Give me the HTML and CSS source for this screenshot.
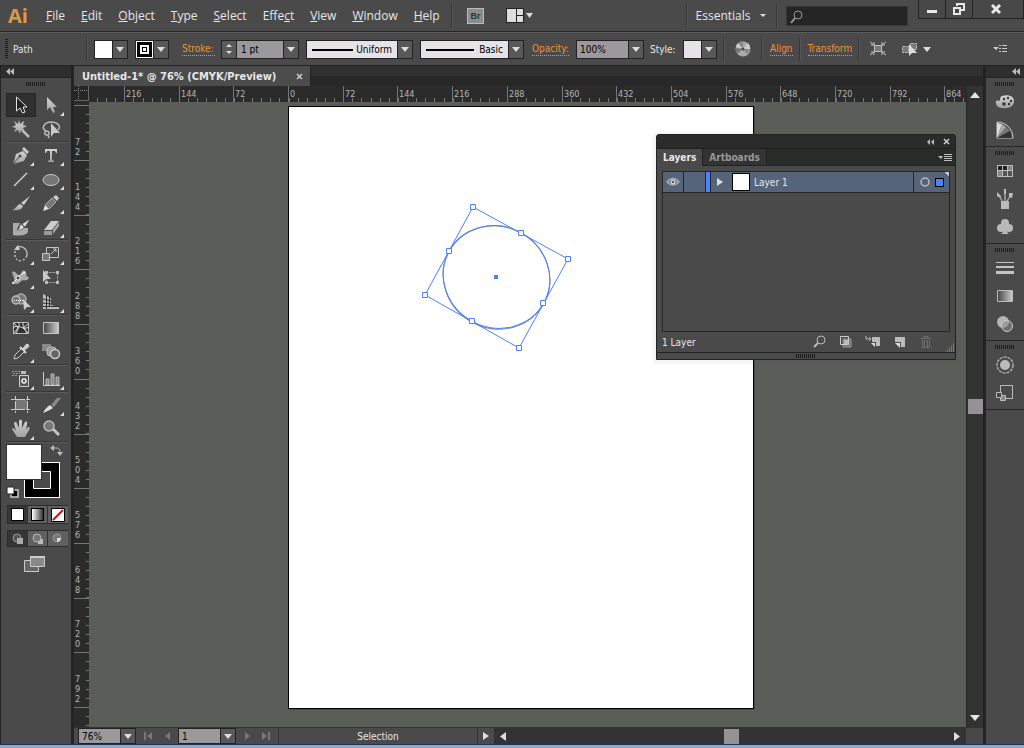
FILE: index.html
```html
<!DOCTYPE html>
<html lang="en">
<head>
  <meta charset="utf-8">
  <title>Untitled-1</title>
  <link rel="stylesheet" href="styles.css">
</head>
<body>

<svg class="defs" width="0" height="0">
  <defs>
    <linearGradient id="metal" x1="0" y1="0" x2="0" y2="1">
      <stop offset="0" stop-color="#d4d4d4"/><stop offset="1" stop-color="#a0a0a0"/>
    </linearGradient>
    <linearGradient id="fade">
      <stop offset="0" stop-color="#444"/><stop offset="1" stop-color="#ccc"/>
    </linearGradient>
  </defs>
</svg>

<header class="menubar">
  <span class="logo">Ai</span>
  <nav class="menus">
    <a href="#"><u>F</u>ile</a>
    <a href="#"><u>E</u>dit</a>
    <a href="#"><u>O</u>bject</a>
    <a href="#"><u>T</u>ype</a>
    <a href="#"><u>S</u>elect</a>
    <a href="#">Effe<u>c</u>t</a>
    <a href="#"><u>V</u>iew</a>
    <a href="#"><u>W</u>indow</a>
    <a href="#"><u>H</u>elp</a>
  </nav>
  <i class="sep"></i>
  <button class="bridge">Br</button>
  <button class="arrange" aria-label="Arrange documents">
    <svg width="28" height="16" viewBox="0 0 28 16"><path d="M0 0h18v15H0z" fill="#222"/><path d="M1 1h16v13H1z" fill="#ddd"/><path d="M10.500 1v13M10.500 7.500H17" stroke="#222"/><path d="M20 5h7l-3.500 5z" fill="#ddd"/></svg>
  </button>
  <div class="menu-right">
    <i class="sep"></i>
    <button class="workspace">Essentials <i class="tri small"></i></button>
    <i class="sep"></i>
    <label class="search">
      <svg width="14" height="14" viewBox="0 0 14 14" fill="none" stroke="#999"><circle cx="8" cy="5" r="4"/><path d="M5 8l-4 5" stroke-width="2"/></svg>
      <input type="text" aria-label="Search">
    </label>
    <div class="winbtns">
      <button aria-label="Minimize"><svg width="12" height="14"><path d="M1 8h10v3H1z" fill="#e8e8e8"/></svg></button>
      <button aria-label="Restore"><svg width="14" height="14" fill="none" stroke="#e8e8e8" stroke-width="2"><path d="M5 4V2h7v6h-3M2 6h6v6H2z"/></svg></button>
      <button class="x" aria-label="Close"><svg width="12" height="12"><path d="M2 2l8 8M10 2l-8 8" stroke="#e8e8e8" stroke-width="3"/></svg></button>
    </div>
  </div>
</header>

<section class="control">
  <i class="vgrip"></i>
  <span class="what">Path</span>
  <i class="sep"></i>
  <button class="swatch" aria-label="Fill"><i class="chip white"></i><i class="arrow"></i></button>
  <button class="swatch" aria-label="Stroke color"><i class="chip ring"></i><i class="arrow"></i></button>
  <label class="link stroke" for="weight">Stroke:</label>
  <span class="combo">
    <i class="spin"><i class="tri up"></i><i class="tri small"></i></i>
    <input id="weight" class="weight" type="text" value="1 pt"><i class="arrow"></i>
  </span>
  <span class="combo line">
    <svg width="46" height="17"><path d="M5 8h41v2H5z"/></svg>
    <select aria-label="Width profile"><option>Uniform</option></select><i class="arrow"></i>
  </span>
  <span class="combo line basic">
    <svg width="53" height="17"><path d="M5 8h48v2H5z"/></svg>
    <select aria-label="Brush"><option>Basic</option></select><i class="arrow"></i>
  </span>
  <label class="link opacity" for="opac">Opacity:</label>
  <span class="combo">
    <input id="opac" class="opac" type="text" value="100%"><i class="arrow"></i>
  </span>
  <span class="style">Style:</span>
  <button class="swatch" aria-label="Graphic style"><i class="chip pale"></i><i class="arrow"></i></button>
  <i class="sep"></i>
  <button class="plain wheel" aria-label="Recolor"><svg width="16" height="16" viewBox="0 0 16 16"><circle cx="8" cy="8" r="7.500" fill="#aaa"/><path d="M8 8L3 2a7 7 0 0 1 5-2zM8 8h7a7 7 0 0 1-3 5z" fill="#888"/><path d="M8 8l5-6a7 7 0 0 1 2 6zM8 8L1 6a7 7 0 0 1 2-4z" fill="#ccc"/><path d="M8 8L2 13A7 7 0 0 1 1 7z" fill="#777"/><circle cx="8" cy="8" r="1.500" fill="#4a4a4a"/></svg></button>
  <i class="sep"></i>
  <a class="link" href="#">Align</a>
  <i class="sep"></i>
  <a class="link" href="#">Transform</a>
  <i class="sep"></i>
  <button class="plain" aria-label="Isolate"><svg width="16" height="16" viewBox="0 0 16 16" fill="none" stroke="#c4c4c4"><path d="M4.500 4.500h7v6h-7z" fill="#777"/><path d="M0 1l4 3M16 1l-4 3M0 14l4-3M16 14l-4-3M1 4h3V1M15 4h-3V1M1 11h3v3M15 11h-3v3"/></svg></button>
  <button class="plain similar" aria-label="Select similar"><svg width="30" height="16" viewBox="0 0 30 16"><path d="M1.500 5.500h6v6h-6zM9.500 2.500h6v6h-6z" fill="#777" stroke="#bbb" stroke-dasharray="3 1"/><path d="M8 3v12l3-3h5z" fill="#ddd"/><path d="M22 6h8l-4 5z" fill="#ddd"/></svg></button>
  <button class="plain flyout" aria-label="Panel menu"><svg width="14" height="10"><path d="M0 3h6L3 6zM6 1h2v1H6zM9 1h5v1H9zM6 4h2v1H6zM9 4h5v1H9zM6 7h2v1H6zM9 7h5v1H9z" fill="#ccc"/></svg></button>
</section>

<div class="work">

  <aside class="toolbox">
    <div class="cap"><svg width="8" height="7"><path d="M4 0v7L0 3.500zM8 0v7L4 3.500z" fill="#bbb"/></svg></div>
    <i class="grip"></i>
    <div class="tools">
      <button class="on" aria-label="Selection"><svg viewBox="0 0 30 24"><path d="M10.500 4v14l3.500-3 2.500 5 2.500-1-2-5h4z" fill="#222" stroke="#e4e4e4"/></svg></button>
      <button aria-label="Direct selection"><svg viewBox="0 0 30 24"><path d="M10 4v13l3-3 3 6 2-1-2-5h4z" fill="url(#metal)"/><path class="more" d="M27 19v4h-4z"/></svg></button>
      <button aria-label="Magic wand"><svg viewBox="0 0 30 24"><path d="M13 3l1 4 4-3-1 4 4 1-4 2 2 4-4-2-1 4-2-4-4 2 2-4-4-1 4-2-2-4 4 3z" fill="url(#metal)"/><path d="M16 13l7 7" stroke="#bbb" stroke-width="2.500"/></svg></button>
      <button aria-label="Lasso"><svg viewBox="0 0 30 24"><path d="M9 14c-6-3-1-9 5-9s11 4 7 8M9 14c4 0 4 4 1 4s-3-3-1-4M11 18l1 3" fill="none" stroke="#bbb" stroke-width="1.500"/><path d="M14 6v14l3-4h6z" fill="#c8c8c8"/></svg></button>
      <i class="rule"></i>
      <button aria-label="Pen"><svg viewBox="0 0 30 24"><path d="M7 21l3-10 7-3 4 4-3 6-11 3z" fill="url(#metal)"/><path d="M16 6l2-2 5 5-2 2z" fill="#ccc"/><path d="M7 21l6-7" stroke="#444"/><circle cx="14" cy="13" r="1.500" fill="#444"/><path class="more" d="M28 19v4h-4z"/></svg></button>
      <button aria-label="Type"><svg viewBox="0 0 30 24"><path d="M8 6h12v4h-1l-1-2h-3v9l2 1v1h-6v-1l2-1V8h-3l-1 2H8z" fill="url(#metal)"/><path class="more" d="M27 19v4h-4z"/></svg></button>
      <button aria-label="Line segment"><svg viewBox="0 0 30 24"><path d="M8 19L21 6" stroke="#ccc" stroke-width="1.500"/><path class="more" d="M28 19v4h-4z"/></svg></button>
      <button aria-label="Ellipse"><svg viewBox="0 0 30 24"><ellipse cx="14" cy="13" rx="8" ry="5.500" fill="#777" stroke="#c4c4c4"/><path class="more" d="M27 19v4h-4z"/></svg></button>
      <button aria-label="Paintbrush"><svg viewBox="0 0 30 24"><path d="M24 5l-9 7 3 2z" fill="#ccc"/><path d="M14 13l3 2c-1 4-6 5-11 4 4-1 5-5 8-6z" fill="url(#metal)"/></svg></button>
      <button aria-label="Pencil"><svg viewBox="0 0 30 24"><path d="M6 20l2-6 4 4z" fill="#ddd"/><path d="M8 14l7-7 4 4-7 7z" fill="#777" stroke="#aaa"/><path d="M16 6l3-2 3 3-2 3z" fill="#ccc"/><path class="more" d="M27 19v4h-4z"/></svg></button>
      <button aria-label="Blob brush"><svg viewBox="0 0 30 24"><path d="M7 8h7l-3 6c1 2 5 1 7-1h4v4c-2 4-10 4-15 3z" fill="#aaa"/><path d="M24 4l-8 5 3 3zM15 9l3 3c-1 3-4 3-7 3 3-1 2-4 4-6z" fill="#ddd" stroke="#444" stroke-width=".5"/></svg></button>
      <button aria-label="Eraser"><svg viewBox="0 0 30 24"><path d="M14 6h8l-7 9H7z" fill="#ccc"/><path d="M7 16h8v4H7z" fill="#999"/><path d="M16 15l6-8v4l-6 8z" fill="#aaa"/><path class="more" d="M27 19v4h-4z"/></svg></button>
      <i class="rule"></i>
      <button aria-label="Rotate"><svg viewBox="0 0 30 24"><path d="M10 6a7 7 0 1 1 1 12" fill="none" stroke="#bbb" stroke-width="1.500" stroke-dasharray="19 2 2 2 2 2"/><path d="M9 9v5l2 4" fill="none" stroke="#bbb" stroke-width="1.500" stroke-dasharray="2 2"/><path d="M8 8l4-5 2 5z" fill="#ccc"/><path class="more" d="M28 19v4h-4z"/></svg></button>
      <button aria-label="Scale"><svg viewBox="0 0 30 24" fill="none" stroke="#c4c4c4"><path d="M9.500 5.500h12v10h-12z"/><path d="M5.500 11.500h7v7h-7z" fill="#777"/><path d="M14 12l5-5m-3 0h3v3"/><path class="more" d="M27 19v4h-4z"/></svg></button>
      <button aria-label="Width"><svg viewBox="0 0 30 24"><path d="M6 6c4-2 4 3 7 3s2-6 6-4c3 1-1 6 4 6-1 5-5 2-8 4-2 3-5 4-8 2 3-4 0-6-1-11z" fill="#aaa"/><path d="M7 17L17 7" stroke="#eee"/><circle cx="12" cy="12" r="2" fill="#444" stroke="#eee"/><circle cx="7" cy="17" r="1" fill="#fff"/><circle cx="18" cy="7" r="1" fill="#fff"/><path class="more" d="M28 19v4h-4z"/></svg></button>
      <button aria-label="Free transform"><svg viewBox="0 0 30 24"><path d="M9.500 6.500h11v10h-11z" fill="none" stroke="#aaa" stroke-dasharray="2 1"/><path d="M8 5h3v3H8zM19 5h3v3h-3zM19 15h3v3h-3zM8 15h3v3H8z" fill="#bbb"/><path d="M6 4v12l3-3h5z" fill="#ccc"/></svg></button>
      <button aria-label="Shape builder"><svg viewBox="0 0 30 24"><circle cx="15" cy="9" r="5" fill="#777" stroke="#aaa" stroke-width="1.500"/><circle cx="10" cy="10" r="4" fill="#777" stroke="#bbb" stroke-width="1.500"/><path d="M8 10.500h9" stroke="#fff" stroke-dasharray="1 1"/><path d="M17 9l1 11 3-3h4z" fill="#ccc"/><path class="more" d="M28 19v4h-4z"/></svg></button>
      <button aria-label="Perspective grid"><svg viewBox="0 0 30 24"><path d="M6 4l8 4v7l8 2v2H6z" fill="#bbb"/><path d="M9.500 5v14M12.500 6v10M6 9l8 2M6 13l8 1M6 16.500h16" stroke="#333"/><path class="more" d="M27 19v4h-4z"/></svg></button>
      <i class="rule"></i>
      <button aria-label="Mesh"><svg viewBox="0 0 30 24"><path d="M7.500 6.500h15v11h-15z" fill="#333" stroke="#bbb"/><path d="M7 12c5-5 10 3 16-1M12 6c4 5-3 8-1 12M18 6c-4 4 4 8 2 12M8 7l4 5-4 5M22 8l-5 4 5 5" fill="none" stroke="#ddd"/></svg></button>
      <button aria-label="Gradient"><svg viewBox="0 0 30 24"><path d="M6.500 6.500h15v11h-15z" fill="url(#fade)" stroke="#c4c4c4"/></svg></button>
      <button aria-label="Eyedropper"><svg viewBox="0 0 30 24"><path d="M16 9l4-5c2-1 4 1 3 3l-5 4z" fill="#ccc"/><path d="M14 7l6 6" stroke="#ddd" stroke-width="2"/><path d="M15 9l-6 6-1 4 4-1 6-6" fill="#444" stroke="#ccc"/><path class="more" d="M28 19v4h-4z"/></svg></button>
      <button aria-label="Blend"><svg viewBox="0 0 30 24"><path d="M5 4h9v7H5z" fill="#888"/><rect x="10" y="7" width="9" height="9" rx="3" fill="#999" stroke="#bbb"/><circle cx="18" cy="14" r="4.500" fill="#666" stroke="#ccc" stroke-width="1.500"/></svg></button>
      <i class="rule"></i>
      <button aria-label="Symbol sprayer"><svg viewBox="0 0 30 24"><path d="M6 4.500h9M7 6.500h7M6 8.500h5" stroke="#999" stroke-dasharray="2 1"/><path d="M15 4h5v3h-5z" fill="#bbb"/><path d="M13.500 8.500h9v11h-9z" fill="#555" stroke="#ccc"/><circle cx="18" cy="14" r="2" fill="none" stroke="#eee" stroke-width="1.500"/><path class="more" d="M28 19v4h-4z"/></svg></button>
      <button aria-label="Column graph"><svg viewBox="0 0 30 24"><path d="M6.500 5v13.500H23" fill="none" stroke="#ccc"/><path d="M9 12h3v6H9zM14 7h3v11h-3zM19 10h3v8h-3z" fill="#888" stroke="#ccc" stroke-width=".8"/><path class="more" d="M27 19v4h-4z"/></svg></button>
      <i class="rule"></i>
      <button aria-label="Artboard"><svg viewBox="0 0 30 24"><path d="M10 7h11v9H10z" fill="#777"/><path d="M9.500 3v17M21.500 3v17M5 6.500h20M5 16.500h20" stroke="#ccc" stroke-dasharray="4 1 9 1 4"/></svg></button>
      <button aria-label="Slice"><svg viewBox="0 0 30 24"><path d="M24 5l-4 0-6 7 3 2z" fill="#888"/><path d="M13 12l3 3c-2 2-6 3-10 5 2-4 4-6 7-8z" fill="#ddd"/><path class="more" d="M27 19v4h-4z"/></svg></button>
      <button aria-label="Hand"><svg viewBox="0 0 30 24"><path d="M11 20l-5-8c1-2 3 0 4 2L8 6c1-2 3-1 3 1l2 4V4c1-2 3-1 3 0v7l3-6c1-1 3 0 2 2l-1 6 2-3c2 0 2 1 1 3l-4 7z" fill="url(#metal)"/><path class="more" d="M28 19v4h-4z"/></svg></button>
      <button aria-label="Zoom"><svg viewBox="0 0 30 24"><path d="M16 12l6 6" stroke="#c4c4c4" stroke-width="3"/><circle cx="12" cy="9" r="5" fill="#777" stroke="#bbb" stroke-width="1.500"/></svg></button>
      <i class="rule"></i>
    </div>
    <svg class="paint" width="66" height="58" viewBox="0 2 66 58">
      <path d="M18 20h36v36H18z" fill="#fff"/><path d="M19 21h34v34H19z"/><path d="M27.500 29.500h17v17h-17z" fill="#4a4a4a" stroke="#fff"/>
      <path d="M0 2h36v36H0z" fill="#333"/><path d="M1 3h34v34H1z" fill="#fff"/>
      <path d="M47 6h4q3 0 3 5" fill="none" stroke="#bbb"/><path d="M44 6l4-3v6zM51 10h6l-3 4z" fill="#bbb"/>
      <path d="M5 48h7v7H5z" stroke="#ccc" stroke-width="1.500"/><path d="M1 45h7v7H1z" fill="#fff" stroke="#222"/>
    </svg>
    <div class="trio">
      <button class="on" aria-label="Color"><i class="box"></i></button>
      <button aria-label="Gradient fill"><i class="box grad"></i></button>
      <button aria-label="None"><svg width="14" height="14"><path d="M.5.5h13v13H.5z" fill="#fff" stroke="#000"/><path d="M2 12L12 2" stroke="#e00" stroke-width="2"/></svg></button>
    </div>
    <div class="trio modes">
      <button class="on" aria-label="Draw normal"><svg width="12" height="12"><circle cx="5" cy="5" r="4" fill="#555" stroke="#999"/><path d="M5 5h6v6H5z" fill="#aaa"/></svg></button>
      <button aria-label="Draw behind"><svg width="12" height="12"><path d="M6 6h5v5H6z" fill="#bbb"/><circle cx="5" cy="5" r="4" fill="#777" stroke="#bbb"/></svg></button>
      <button aria-label="Draw inside"><svg width="12" height="12"><circle cx="5" cy="5" r="4" fill="#777" stroke="#999"/><path d="M5 5h4c0 2-2 4-4 4z" fill="#ddd"/></svg></button>
    </div>
    <button class="plain screen" aria-label="Screen mode"><svg width="22" height="18" viewBox="0 0 22 18" stroke="#ccc"><path d="M.5 5.500h14v11H.5z" fill="#666"/><path d="M6.500 1.500h14v10h-14z" fill="#888"/><path d="M6 1h15v2H6z" fill="#ccc" stroke="none"/></svg></button>
  </aside>

  <main class="doc">
    <div class="tabs">
      <div class="tab">Untitled-1* @ 76% (CMYK/Preview) <button class="plain" aria-label="Close tab"><svg width="7" height="7"><path d="M1 1l5 5M6 1L1 6" stroke="#ccc" stroke-width="1.500"/></svg></button></div>
    </div>
    <div class="sheet">
      <svg class="corner" width="15" height="15"><path d="M4.500 0v15M0 4.500h15" stroke="#888" stroke-dasharray="1 1"/><path d="M0 14.500h15M14.500 0v15" stroke="#666"/></svg>
      <div class="ruler top">
        <svg width="1900" height="16" shape-rendering="crispEdges">
          <path d="M8 13.500H1900" stroke="#777" stroke-width="4" stroke-dasharray="1 8.120"/>
          <path d="M35.500 0v16M90.500 0v16M144.500 0v16M199.500 0v16M254.500 0v16M308.500 0v16M363.500 0v16M418.500 0v16M473.500 0v16M527.500 0v16M582.500 0v16M637.500 0v16M691.500 0v16M746.500 0v16M801.500 0v16M855.500 0v16" stroke="#777"/>
          <g class="num">
            <text x="37" y="11">216</text><text x="92" y="11">144</text><text x="146" y="11">72</text><text x="201" y="11">0</text>
            <text x="256" y="11">72</text><text x="310" y="11">144</text><text x="365" y="11">216</text><text x="420" y="11">288</text>
            <text x="475" y="11">360</text><text x="529" y="11">432</text><text x="584" y="11">504</text><text x="639" y="11">576</text>
            <text x="693" y="11">648</text><text x="748" y="11">720</text><text x="803" y="11">792</text><text x="857" y="11">864</text>
          </g>
        </svg>
      </div>
      <div class="vscroll">
        <button class="plain" aria-label="Scroll up"><svg width="10" height="8"><path d="M5 1l5 6H0z" fill="#e4e4e4"/></svg></button>
        <i class="thumb"></i>
        <button class="plain" aria-label="Scroll down"><svg width="10" height="8"><path d="M0 1h10L5 7z" fill="#e4e4e4"/></svg></button>
      </div>
      <div class="ruler left">
        <svg width="15" height="1300" shape-rendering="crispEdges">
          <path d="M13.500 3V1300" stroke="#777" stroke-width="3" stroke-dasharray="1 8.120"/>
          <path d="M0 3.500h15M0 58.500h15M0 113.500h15M0 167.500h15M0 222.500h15M0 277.500h15M0 332.500h15M0 386.500h15M0 441.500h15M0 496.500h15M0 550.500h15M0 605.500h15" stroke="#777"/>
          <g class="num">
            <text><tspan x="1" y="43">7</tspan><tspan x="1" y="53">2</tspan></text>
            <text><tspan x="1" y="88">1</tspan><tspan x="1" y="98">4</tspan><tspan x="1" y="108">4</tspan></text>
            <text><tspan x="1" y="142">2</tspan><tspan x="1" y="152">1</tspan><tspan x="1" y="162">6</tspan></text>
            <text><tspan x="1" y="197">2</tspan><tspan x="1" y="207">8</tspan><tspan x="1" y="217">8</tspan></text>
            <text><tspan x="1" y="252">3</tspan><tspan x="1" y="262">6</tspan><tspan x="1" y="272">0</tspan></text>
            <text><tspan x="1" y="307">4</tspan><tspan x="1" y="317">3</tspan><tspan x="1" y="327">2</tspan></text>
            <text><tspan x="1" y="361">5</tspan><tspan x="1" y="371">0</tspan><tspan x="1" y="381">4</tspan></text>
            <text><tspan x="1" y="416">5</tspan><tspan x="1" y="426">7</tspan><tspan x="1" y="436">6</tspan></text>
            <text><tspan x="1" y="471">6</tspan><tspan x="1" y="481">4</tspan><tspan x="1" y="491">8</tspan></text>
            <text><tspan x="1" y="525">7</tspan><tspan x="1" y="535">2</tspan><tspan x="1" y="545">0</tspan></text>
            <text><tspan x="1" y="580">7</tspan><tspan x="1" y="590">9</tspan><tspan x="1" y="600">2</tspan></text>
          </g>
        </svg>
      </div>
      <div class="canvas">
        <div class="artboard">
          <svg width="464" height="601" viewBox="289 107 464 601" fill="none" stroke="#4a80ff">
            <ellipse cx="496.500" cy="277.500" rx="54" ry="51" stroke="#888" transform="rotate(28 496.500 277.500)"/>
            <ellipse cx="496.500" cy="277" rx="54" ry="50.500" transform="rotate(28 496.500 277)"/>
            <path d="M473 207L568 259 519 348 425 295z"/>
            <path d="M494 275h4v4h-4z" fill="#4a80ff" stroke="none"/>
            <g fill="#fff">
              <path d="M470.500 204.500h5v5h-5zM518.500 230.500h5v5h-5zM565.500 256.500h5v5h-5zM540.500 300.500h5v5h-5zM516.500 345.500h5v5h-5zM469.500 318.500h5v5h-5zM422.500 292.500h5v5h-5zM446.500 248.500h5v5h-5z"/>
            </g>
          </svg>
        </div>

        <section class="panel">
          <div class="panel-cap">
            <button class="plain" aria-label="Collapse"><svg width="8" height="6"><path d="M3 0v6L0 3zM7 0v6L4 3z" fill="#bbb"/></svg></button>
            <button class="plain" aria-label="Close panel"><svg width="7" height="7"><path d="M1 1l5 5M6 1L1 6" stroke="#ccc" stroke-width="1.500"/></svg></button>
          </div>
          <div class="panel-tabs">
            <button class="on">Layers</button><button>Artboards</button>
            <button class="plain pm" aria-label="Layers menu"><svg width="14" height="9"><path d="M0 3h5L3 6zM6 1h8v1H6zM6 3h8v1H6zM6 5h8v1H6zM6 7h8v1H6z" fill="#bbb"/></svg></button>
          </div>
          <ul class="layers">
            <li>
              <span class="eye"><svg width="14" height="10" viewBox="0 0 14 10"><path d="M1 5q6-7 12 0-6 6-12 0z" fill="#777" stroke="#a8acb4" stroke-width="1.500"/><circle cx="7" cy="5" r="2.500" fill="#ccc"/><circle cx="7" cy="5" r="1" fill="#333"/></svg></span>
              <span class="lock"></span>
              <i class="color"></i>
              <span class="name"><i class="tri right"></i><i class="thumbnail"></i>Layer 1</span>
              <span class="target"><svg width="10" height="10"><circle cx="5" cy="5" r="4" fill="none" stroke="#bbb" stroke-width="1.500"/></svg><i class="sel"></i></span>
            </li>
          </ul>
          <div class="panel-foot">
            <span class="count">1 Layer</span>
            <button class="plain" aria-label="Locate object"><svg width="14" height="14" fill="none" stroke="#bbb"><circle cx="8" cy="5" r="4"/><path d="M5 8l-4 4" stroke-width="2"/></svg></button>
            <button class="plain" aria-label="Clipping mask"><svg width="14" height="14"><path d="M4 4h8v8H4z" fill="#777" stroke="#999"/><path d="M1.500 1.500h8v8h-8z" fill="none" stroke="#ccc"/><path d="M5 5h4v4H5z" fill="#bbb"/></svg></button>
            <button class="plain" aria-label="New sublayer"><svg width="16" height="14"><path d="M1 1v3h5M4 2l2 2-2 2" fill="none" stroke="#bbb"/><path d="M7 2h8v9h-4V7H7z" fill="#bbb"/><path d="M6 8h4v4z" fill="#ddd"/></svg></button>
            <button class="plain" aria-label="New layer"><svg width="14" height="14"><path d="M2 2h10v10H8V7H2z" fill="#bbb"/><path d="M2 8h5v5z" fill="#ddd"/></svg></button>
            <button class="plain" aria-label="Delete"><svg width="14" height="14" fill="none" stroke="#707070"><path d="M2 3.500h10M5 3V1.500h4V3M3.500 5v7.500h7V5M5.500 5v7M8.500 5v7"/></svg></button>
            <i class="resize"></i>
          </div>
          <div class="panel-grip"><i class="grip"></i></div>
        </section>
      </div>
    </div>
    <footer class="status">
      <span class="combo"><select class="zoomlevel" aria-label="Zoom level"><option>76%</option></select><i class="arrow"></i></span>
      <span class="nav"><button class="plain" aria-label="First"><svg width="9" height="8"><path d="M0 0h2v8H0zM8 0v8L3 4z" fill="#777"/></svg></button><button class="plain" aria-label="Previous"><svg width="6" height="8"><path d="M5 0v8L0 4z" fill="#777"/></svg></button></span>
      <span class="combo"><select class="page" aria-label="Artboard number"><option>1</option></select><i class="arrow"></i></span>
      <span class="nav"><button class="plain" aria-label="Next"><svg width="6" height="8"><path d="M1 0v8l5-4z" fill="#777"/></svg></button><button class="plain" aria-label="Last"><svg width="9" height="8"><path d="M0 0v8l5-4zM6 0h2v8H6z" fill="#777"/></svg></button></span>
      <span class="mode">Selection</span>
      <button class="plain more-btn" aria-label="Status menu"><i class="tri right"></i></button>
      <div class="hscroll">
        <button class="plain" aria-label="Scroll left"><svg width="7" height="9"><path d="M6 0v9L0 4.500z" fill="#ddd"/></svg></button>
        <i class="thumb"></i>
        <button class="plain" aria-label="Scroll right"><svg width="7" height="9"><path d="M1 0v9l6-4.500z" fill="#ddd"/></svg></button>
      </div>
      <i class="end"></i>
    </footer>
  </main>

  <aside class="dock">
    <div class="cap"><svg width="8" height="7"><path d="M4 0v7L0 3.500zM8 0v7L4 3.500z" fill="#bbb"/></svg></div>
    <div class="group">
      <i class="grip"></i>
      <button aria-label="Color"><svg viewBox="0 0 20 20"><path d="M1 11c-1-2 1-3 3-2 2 0 0-4 3-5 6-2 12 0 12 5s-5 8-11 7c-4 0-7-2-7-5z" fill="url(#metal)"/><circle cx="9" cy="7" r="1.200" fill="#333"/><circle cx="13" cy="6" r="1.200" fill="#333"/><circle cx="16" cy="9" r="1.200" fill="#333"/><circle cx="14" cy="12" r="1.200" fill="#333"/><circle cx="9" cy="12" r="1.800" fill="#333"/></svg></button>
      <button aria-label="Color guide"><svg viewBox="0 0 20 20"><path d="M2 2c9 0 16 7 16 16H2z" fill="#555" stroke="#ccc"/><path d="M2 18V3l5 1z" fill="#ddd"/><path d="M2 18L7 4l4 3z" fill="#aaa"/><path d="M2 18l9-11 4 4z" fill="#777"/><path d="M2 18l13-7 2 7z" fill="#333"/></svg></button>
    </div>
    <div class="group">
      <i class="grip"></i>
      <button aria-label="Swatches"><svg viewBox="0 0 20 20"><path d="M2 4h16v12H2z" fill="#bbb"/><path d="M3 5h4v4H3zM8 5h4v4H8z" fill="#222"/><path d="M13 5h4v4h-4zM3 10h4v5H3z" fill="#888"/><path d="M8 10h4v5H8zM13 10h4v5h-4z" fill="#555"/></svg></button>
      <button aria-label="Brushes"><svg viewBox="0 0 20 20"><path d="M6 12h8v8H6z" fill="#bbb"/><path d="M7 12L4 6M10 12V3M12 12l4-6" stroke="#ccc"/><path d="M2 3l4 4-1 2-3-2zM9 0h2v5H9zM14 4l4 0-1 5-3-1z" fill="#bbb"/></svg></button>
      <button aria-label="Symbols"><svg viewBox="0 0 20 20" fill="#b8b8b8"><circle cx="10" cy="6" r="4"/><circle cx="6" cy="11" r="4"/><circle cx="14" cy="11" r="4"/><path d="M9 9h2l1 6 2 2H6l2-2z"/></svg></button>
    </div>
    <div class="group">
      <i class="grip"></i>
      <button aria-label="Stroke"><svg viewBox="0 0 20 20"><path d="M1 4h18v1H1zM1 8h18v2H1zM1 13h18v3H1z" fill="#c4c4c4"/></svg></button>
      <button aria-label="Gradient panel"><svg viewBox="0 0 20 20"><path d="M2.500 4.500h15v11h-15z" fill="url(#fade)" stroke="#bbb"/></svg></button>
      <button aria-label="Transparency"><svg viewBox="0 0 20 20"><circle cx="8" cy="8" r="6" fill="#b4b4b4"/><circle cx="12" cy="12" r="5.500" fill="#888" fill-opacity=".6" stroke="#ccc"/></svg></button>
    </div>
    <div class="group">
      <i class="grip"></i>
      <button aria-label="Appearance"><svg viewBox="0 0 20 20"><circle cx="10" cy="10" r="5" fill="#bbb"/><circle cx="10" cy="10" r="8" fill="none" stroke="#aaa" stroke-width="1.500" stroke-dasharray="3 1"/></svg></button>
      <button aria-label="Graphic styles"><svg viewBox="0 0 20 20" stroke="#bbb"><path d="M5.500 2.500h12v13h-12z" fill="none"/><path d="M5.500 12.500h5v5h-5z" fill="#888"/><path d="M1.500 9.500h5v5h-5z" fill="#444"/></svg></button>
    </div>
  </aside>
</div>
<div class="taskbar"></div>

</body>
</html>
```
FILE: styles.css
```css
* { box-sizing: border-box; }

body {
  margin: 0;
  height: 100vh;
  display: flex;
  flex-direction: column;
  overflow: hidden;
  background: #4a4a4a;
  color: #e6e6e6;
  font-family: "DejaVu Sans Condensed", "DejaVu Sans", Tahoma, sans-serif;
  font-size: 10px;
}

.defs { position: absolute; }
svg { display: block; flex: none; }
i { display: block; font-style: normal; flex: none; }
a { color: inherit; text-decoration: none; }

button, input, select {
  font: inherit;
  color: inherit;
  margin: 0;
  padding: 0;
  border: 0;
  border-radius: 0;
  background: none;
  outline: 0;
  appearance: none;
}
button { display: flex; align-items: center; justify-content: center; flex: none; }

/* shared bits */
.sep { width: 2px; height: 24px; background: #383838; border-right: 1px solid #565656; }
.grip { width: 20px; height: 4px; background: repeating-linear-gradient(90deg, #1c1c1c 0 1px, #4a4a4a 1px 2px); }
.vgrip { width: 3px; height: 20px; background: repeating-linear-gradient(#1c1c1c 0 1px, #4a4a4a 1px 2px); }
.tri { width: 0; height: 0; border: solid transparent; border-width: 4px 4px 0; border-top-color: #ddd; }
.tri.small { border-width: 3px 3px 0; }
.tri.up { border-width: 0 3px 3px; border-bottom-color: #ddd; }
.tri.right { border-width: 4px 0 4px 6px; border-top-color: transparent; border-left-color: #ddd; }

/* menu bar */
.menubar {
  flex: none;
  height: 32px;
  display: flex;
  align-items: center;
  border-bottom: 1px solid #262626;
  font-family: "Open Sans", sans-serif;
  font-size: 12px;
}
.logo {
  width: 37px;
  padding-left: 8px;
  color: #dc9a42;
  font: bold 20px/28px "Open Sans", sans-serif;
}
.menus { display: flex; gap: 16px; width: 397px; padding-left: 9px; }
.menus + .sep { margin-left: 17px; }
.bridge {
  width: 17px;
  height: 16px;
  margin: 0 22px 0 14px;
  background: #8c8c8c;
  border: 1px solid #bbb;
  color: #333;
  font: bold 9px "Liberation Sans", sans-serif;
}
.menu-right { margin-left: auto; display: flex; align-items: center; height: 31px; }
.workspace { width: 86px; gap: 10px; }
.workspace + .sep { margin: 0 2px; }
.search {
  width: 122px;
  height: 20px;
  margin: 0 10px 0 6px;
  padding: 3px;
  display: flex;
  background: #252525;
  border: 1px solid #363636;
}
.search input { min-width: 0; flex: 1; }
.winbtns { display: flex; height: 19px; align-self: flex-start; border: 1px solid #222; border-top: 0; background: #484848; }
.winbtns button { width: 27px; border-right: 1px solid #222; }
.winbtns .x { width: 50px; border: 0; padding-right: 4px; }

/* control bar */
.control {
  flex: none;
  height: 34px;
  display: flex;
  align-items: center;
  padding-left: 5px;
  border-top: 1px solid #5c5c5c;
  border-bottom: 1px solid #222;
}
.what { width: 78px; padding-left: 5px; }
.swatch { height: 19px; width: 34px; margin-left: 7px; border: 1px solid #222; }
.what + .sep + .swatch { margin-left: 6px; }
.chip { width: 17px; height: 17px; }
.chip.white { background: #fff; }
.chip.pale { background: #e6e3e8; }
.chip.ring { background: #fff; border: 4px solid #000; outline: 1px solid #fff; outline-offset: -1px; box-shadow: inset 0 0 0 2px #fff, inset 0 0 0 3px #000; }
.arrow {
  width: 15px;
  align-self: stretch;
  display: flex;
  align-items: center;
  justify-content: center;
  background: #585858;
  border-left: 1px solid #222;
}
.arrow::after { content: ""; border: solid transparent; border-width: 5px 4px 0; border-top-color: #ddd; }
.link { color: #f0922e; border-bottom: 1px dotted #f0922e; line-height: 12px; }
.stroke { margin: 0 6px 0 13px; width: 33px; white-space: nowrap; }
.combo { height: 19px; display: flex; align-items: center; border: 1px solid #222; background: #9c999d; color: #000; flex: none; }
.combo input, .combo select { height: 17px; padding-left: 4px; }
.spin { width: 15px; align-self: stretch; background: #5a5a5a; border-right: 1px solid #222; display: flex; flex-direction: column; align-items: center; justify-content: space-evenly; }
.weight { width: 46px; }
.line { margin-left: 7px; background: #e6e3e8; }
.combo.line select { width: 44px; padding: 0; text-align: right; padding-right: 5px; }
.combo.basic select { width: 34px; }
.opacity { margin: 0 7px 0 8px; width: 37px; white-space: nowrap; }
.combo .opac { width: 51px; padding-left: 3px; }
.style { margin-left: 6px; width: 26px; white-space: nowrap; }
.swatch + .sep { margin-left: 6px; }
.wheel { margin: 0 10px; }
.control .sep + a { margin: 0 6px 0 7px; }
.control .sep + .plain:not(.wheel) { margin: 0 15px 0 10px; }
.flyout { margin: 0 17px 0 auto; }

/* work area */
.work { flex: 1; min-height: 0; display: flex; }
.cap { height: 12px; padding: 2px 5px; background: #2e2e2e; border-bottom: 1px solid #222; }

.toolbox { width: 73px; flex: none; border: solid #222; border-width: 0 2px 0 1px; }
.toolbox > .grip { margin: 4px 0 7px 25px; }
.tools { display: grid; grid-template-columns: 31px 31px; padding-left: 5px; }
.tools button { width: 30px; height: 24px; }
.tools svg { width: 30px; height: 24px; }
.tools .on { background: #303030; width: 28px; height: 22px; margin: 1px; box-shadow: 0 0 0 1px #262626; }
.rule { grid-column: 1 / 3; height: 2px; background: #383838; border-bottom: 1px solid #5a5a5a; }
.rule:nth-of-type(2), .rule:nth-of-type(4) { margin-bottom: 1px; }
.more { fill: #ddd; stroke: none; }
.paint { margin: 1px 0 3px 5px; }
.trio { display: flex; width: 61px; margin: 0 0 6px 6px; border: 1px solid #2c2c2c; }
.trio button { width: 20px; height: 17px; background: #606060; border-right: 1px solid #333; }
.trio button:last-child { border: 0; }
.trio .on { background: #363636; }
.trio.modes button { height: 15px; }
.box { width: 13px; height: 13px; background: #fff; border: 1px solid #000; }
.box.grad { background: linear-gradient(90deg, #fff, #333); }
.screen { margin: 8px 0 0 23px; }

/* document */
.doc { flex: 1; min-width: 0; display: flex; flex-direction: column; border-right: 2px solid #222; padding-left: 1px; background: #262626; }
.tabs { flex: none; height: 20px; display: flex; background: linear-gradient(#303030 50%, #272827 50%); }
.tab {
  width: 237px;
  padding: 0 7px 0 8px;
  display: flex;
  align-items: center;
  justify-content: space-between;
  white-space: nowrap;
  background: #4c4c4c;
  border-right: 1px solid #222;
  font-weight: bold;
  font-size: 11px;
}
.sheet {
  flex: 1;
  min-height: 0;
  display: grid;
  grid-template-columns: 15px 1fr 17px;
  grid-template-rows: 16px 1fr;
}
.ruler { background: #2b2b2b; overflow: hidden; min-width: 0; min-height: 0; }
.num { fill: #b4b4b4; font-size: 9px; }
.vscroll, .hscroll { background: #333; display: flex; align-items: center; }
.vscroll { grid-row: 1 / 3; grid-column: 3; flex-direction: column; padding: 5px 0; border-left: 1px solid #262626; }
.thumb { width: 15px; height: 15px; background: #959296; margin: auto; }
.vscroll .thumb { margin-bottom: 300px; }
.canvas { position: relative; overflow: hidden; background: #5b5d59; }
.artboard {
  position: absolute;
  left: 199px;
  top: 4px;
  background: #fff;
  border: 1px solid #000;
  box-shadow: 1px 1px 0 #4a4a4a;
}

/* layers panel */
.panel {
  position: absolute;
  left: 567px;
  top: 32px;
  width: 300px;
  background: #4a4a4a;
  border: 1px solid #222;
  border-radius: 3px 3px 0 0;
  box-shadow: 0 1px 0 3px rgba(60, 90, 70, .06);
}
.panel-cap { height: 14px; display: flex; justify-content: flex-end; gap: 8px; padding-right: 5px; background: #2b2b2b; border-bottom: 1px solid #1e1e1e; }
.panel-tabs { display: flex; height: 17px; background: #2a2c2a; font-weight: bold; border-bottom: 1px solid #222; }
.panel-tabs button { padding: 0 6px; border-right: 1px solid #222; color: #999; background: #333; }
.panel-tabs .on { color: #e8e8e8; background: #4a4a4a; height: 17px; }
.panel-tabs .pm { margin-left: auto; padding: 0 3px; border: 0; background: none; }
.layers { list-style: none; margin: 5px 5px 0; padding: 0; height: 161px; border: 1px solid #262626; }
.layers li { display: flex; height: 21px; background: #56647a; border-bottom: 1px solid #262626; }
.layers li > * { border-right: 1px solid #262626; display: flex; align-items: center; }
.eye { width: 21px; justify-content: center; }
.lock { width: 22px; }
.color { width: 5px; background: #4f80ff; }
.layers .name { flex: 1; gap: 4px; padding-left: 6px; }
.name .tri { margin-right: 5px; }
.thumbnail { width: 18px; height: 18px; background: #fff; border: 1px solid #000; }
.layers .target {
  width: 35px;
  gap: 5px;
  justify-content: center;
  border: 0;
  background: linear-gradient(45deg, transparent 91%, #ccc 91%);
}
.sel { width: 9px; height: 9px; background: #4f80ff; border: 1px solid #000; }
.panel-foot { height: 20px; display: flex; align-items: center; gap: 12px; padding-left: 5px; }
.count { margin-right: auto; }
.resize { width: 10px; height: 10px; align-self: flex-end; clip-path: polygon(100% 0, 100% 100%, 0 100%); background: repeating-linear-gradient(90deg, #777 0 1px, #4a4a4a 1px 2px); }
.panel-grip { height: 7px; display: flex; justify-content: center; align-items: center; border-top: 1px solid #222; }

/* status bar */
.status { flex: none; height: 17px; display: flex; align-items: center; background: #4a4a4a; border-top: 1px solid #333; padding-left: 4px; }
.status .combo { height: 16px; }
.status .combo select { height: 14px; padding-left: 3px; width: 41px; }
.nav { width: 42px; display: flex; justify-content: center; gap: 12px; }
.mode { flex: none; width: 199px; align-self: stretch; display: flex; align-items: center; justify-content: center; border-left: 1px solid #333; }
.more-btn { width: 18px; align-self: stretch; border: solid #333; border-width: 0 1px; }
.hscroll { flex: 1; align-self: stretch; padding: 0 6px 0 5px; }
.hscroll .thumb { margin-right: 214px; }
.end { width: 17px; align-self: stretch; background: #484848; }

/* dock */
.dock { width: 39px; flex: none; border-left: 1px solid #262626; }
.dock .cap { padding-left: 26px; }
.group { padding-bottom: 2px; border-bottom: 1px solid #262626; }
.group .grip { margin: 4px auto 2px; }
.group button { width: 100%; height: 28px; }
.group svg { width: 20px; height: 20px; }

.taskbar { flex: none; height: 4px; background: #93a9c9; border-top: 1px solid #1d3350; }
```
